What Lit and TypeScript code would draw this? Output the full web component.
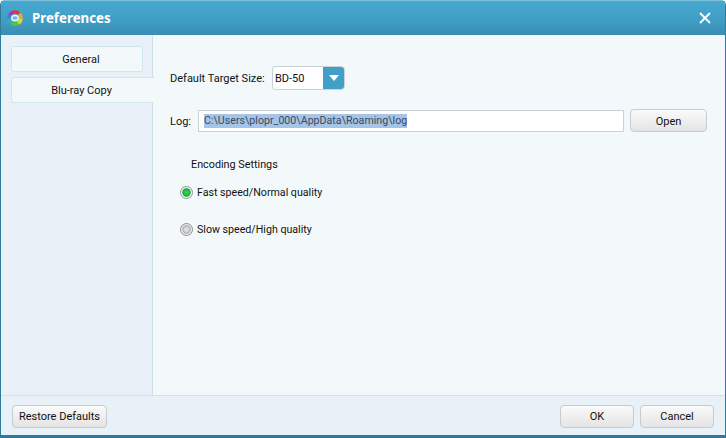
import { LitElement, html, css } from "lit";
import { customElement } from "lit/decorators.js";

@customElement("app-root")
export class AppRoot extends LitElement {
  static styles = css`
    :host { display: block; width: 726px; height: 438px; font-family: Roboto, "Noto Sans", sans-serif; font-size: 11px; color: #111; }
    * { box-sizing: border-box; }
    .win { width: 726px; height: 438px; display: flex; flex-direction: column; background: #2f7a96; padding: 0 1px 3px 1px; border-radius: 5px 5px 0 0; border-top: 1px solid #7cc0da; }
    .title { height: 34px; flex: none; display: flex; align-items: center; padding: 0 14px 0 6px; gap: 9px; background: linear-gradient(#47a9d0, #3f9dc4 60%, #3a8db1); color: #fff; font-family: "Noto Sans", sans-serif; font-weight: 700; font-size: 13.3px; }
    .title span { flex: 1; padding-bottom: 1px; }
    .main { flex: 1; display: flex; min-height: 0; background: #f3f9fa; }
    .side { width: 152px; flex: none; background: #e8f1f7; border-right: 1px solid #cfe2ec; padding: 11px 0 0 10px; display: flex; flex-direction: column; gap: 5px; }
    .tab { height: 26px; width: 132px; display: flex; align-items: center; justify-content: center; background: #f3f9fa; border: 1px solid #d3e5ef; border-radius: 3px; padding: 0 0 0 8px; }
    .tab.on { width: 143px; margin-right: -1px; padding: 0 3px 0 0; border-right: 0; border-radius: 3px 0 0 3px; position: relative; }
    .content { flex: 1; padding: 31px 18px 0 17px; display: flex; flex-direction: column; }
    .row { display: flex; align-items: center; }
    .target .lbl { width: 102px; }
    .select { width: 73px; height: 24px; display: flex; border: 1px solid #c9d2d6; background: #fff; border-radius: 3px 4px 4px 3px; overflow: hidden; }
    .select b { flex: 1; font-weight: 400; padding-left: 2px; line-height: 23px; }
    .arrow { width: 22px; margin: -1px -1px -1px 0; background: #42a0c8; display: flex; align-items: center; justify-content: center; }
    .log { margin-top: 19px; }
    .input { width: 426px; height: 22px; border: 1px solid #c9d2d6; background: #fff; display: flex; align-items: center; padding: 1px 0 0 5px; font-size: 10.65px; }
    .input span { background: #a6c3e8; color: #3a4a5c; line-height: 14px; }
    .log .lbl { width: 28px; padding-top: 1px; }
    .btn { height: 23px; display: flex; align-items: center; justify-content: center; border: 1px solid #c6cccf; border-radius: 4px; background: linear-gradient(#fafafa, #e4e4e4); }
    .open { width: 77px; margin-left: 6px; padding-top: 1px; }
    .heading { margin: 25px 0 0 21px; line-height: 16px; font-size: 10.8px; }
    .radio { margin: 11px 0 0 10px; gap: 4px; height: 16px; font-size: 10.65px; }
    .radio + .radio { margin-top: 21px; }
    .foot { height: 40px; flex: none; background: #e8f1f7; border-top: 1px solid #cfe2ec; display: flex; align-items: center; padding: 2px 11px 0; gap: 6px; }
    .foot .restore { width: 95px; margin-right: auto; }
    .foot .act { width: 74px; }
  `;

  render() {
    return html`<div class="win">
      <div class="title">
        <svg width="16" height="16" viewBox="0 0 16 16">
          <defs>
            <radialGradient id="rg"><stop offset="0" stop-color="#2fd24f"/><stop offset="0.7" stop-color="#1fc03c"/><stop offset="1" stop-color="#158a2c"/></radialGradient>
          </defs>
          <g fill="none" stroke-width="3.6">
            <path d="M2.8 5A6 6 0 0 1 7 2.1" stroke="#a03cc0"/>
            <path d="M7 2.1A6 6 0 0 1 12.2 3.8" stroke="#e5352f"/>
            <path d="M12.2 3.8A6 6 0 0 1 14 8.5" stroke="#f4a51e"/>
            <path d="M14 8.5A6 6 0 0 1 11 13.2" stroke="#d8dc2a"/>
            <path d="M11 13.2A6 6 0 0 1 5 13.2" stroke="#5cc23a"/>
            <path d="M5 13.2A6 6 0 0 1 2 8.5" stroke="#28b8a0"/>
            <path d="M2 8.5A6 6 0 0 1 2.8 5" stroke="#4a78d8"/>
          </g>
          <ellipse cx="8" cy="8" rx="4" ry="3.6" fill="#e6f4fb"/>
          <ellipse cx="8" cy="8" rx="2.6" ry="1.7" fill="#6fb8e6"/>
        </svg>
        <span>Preferences</span>
        <svg width="12" height="12" viewBox="0 0 12 12"><path d="M1 1L11 11M11 1L1 11" stroke="#fff" stroke-width="1.8"/></svg>
      </div>
      <div class="main">
        <div class="side">
          <div class="tab">General</div>
          <div class="tab on">Blu-ray Copy</div>
        </div>
        <div class="content">
          <div class="row target">
            <span class="lbl">Default Target Size:</span>
            <div class="select"><b>BD-50</b><div class="arrow"><svg width="10" height="6" viewBox="0 0 10 6"><path d="M0 0H10L5 6Z" fill="#fff"/></svg></div></div>
          </div>
          <div class="row log">
            <span class="lbl">Log:</span>
            <div class="input"><span>C:\\Users\\plopr_000\\AppData\\Roaming\\log</span></div>
            <div class="btn open">Open</div>
          </div>
          <div class="heading">Encoding Settings</div>
          <div class="row radio">
            <svg width="13" height="13" viewBox="0 0 13 13">
              <defs><radialGradient id="gr"><stop offset="0" stop-color="#2edb4e"/><stop offset="0.65" stop-color="#1ec23c"/><stop offset="1" stop-color="#128a2a"/></radialGradient></defs>
              <circle cx="6.5" cy="6.5" r="6" fill="#f4f6f6" stroke="#8c9494"/><circle cx="6.5" cy="6.5" r="4.2" fill="url(#gr)"/>
            </svg>
            <span>Fast speed/Normal quality</span>
          </div>
          <div class="row radio">
            <svg width="13" height="13" viewBox="0 0 13 13">
              <defs><radialGradient id="gy"><stop offset="0" stop-color="#e2e2e2"/><stop offset="0.6" stop-color="#d4d4d4"/><stop offset="1" stop-color="#9c9c9c"/></radialGradient></defs>
              <circle cx="6.5" cy="6.5" r="6" fill="#eceeee" stroke="#8c9090"/><circle cx="6.5" cy="6.5" r="4.2" fill="url(#gy)"/>
            </svg>
            <span>Slow speed/High quality</span>
          </div>
        </div>
      </div>
      <div class="foot">
        <div class="btn restore">Restore Defaults</div>
        <div class="btn act">OK</div>
        <div class="btn act">Cancel</div>
      </div>
    </div>`;
  }
}
